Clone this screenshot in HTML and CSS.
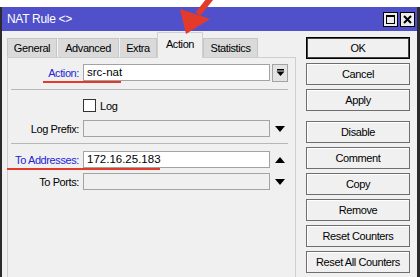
FILE: index.html
```html
<!DOCTYPE html>
<html lang="en">
<head>
  <meta charset="UTF-8">
  <title>NAT Rule</title>
  <link rel="stylesheet" href="styles.css">
</head>
<body>

  <div class="window">
    <div class="titlebar">
      <span class="title">NAT Rule &lt;&gt;</span>
      <div class="title-btns">
        <span class="tbtn">
          <svg width="13" height="13" viewBox="0 0 13 13"><rect x="2.5" y="2.5" width="8" height="8" fill="none" stroke="#000"/><rect x="2" y="2" width="9" height="2" fill="#000"/></svg>
        </span>
        <span class="tbtn">
          <svg width="13" height="13" viewBox="0 0 13 13"><path d="M3 3 L10 10 M10 3 L3 10" stroke="#000" stroke-width="2"/></svg>
        </span>
      </div>
    </div>

    <div class="body">
      <div class="main">
        <div class="tabs">
          <span class="tab tab-general">General</span>
          <span class="tab tab-advanced">Advanced</span>
          <span class="tab tab-extra">Extra</span>
          <span class="tab tab-action active">Action</span>
          <span class="tab tab-stats">Statistics</span>
        </div>

        <div class="panel">
          <div class="row first">
            <span class="lbl link">Action:</span>
            <span class="field">src-nat</span>
            <span class="side drop-btn">
              <svg width="9" height="9" viewBox="0 0 9 9"><rect x="1" y="1" width="7" height="1.5" fill="#000"/><path d="M0.5 3.5 H8.5 L4.5 8 Z" fill="#000"/></svg>
            </span>
          </div>

          <div class="sep"></div>

          <div class="row check-row">
            <span class="lbl"></span>
            <span class="checkbox"></span>
            <span class="check-text">Log</span>
          </div>

          <div class="row prefix-row">
            <span class="lbl">Log Prefix:</span>
            <span class="field disabled"></span>
            <span class="side"><span class="tri-down"></span></span>
          </div>

          <div class="sep sep2"></div>

          <div class="row addr-row">
            <span class="lbl link">To Addresses:</span>
            <span class="field">172.16.25.183</span>
            <span class="side"><span class="tri-up"></span></span>
          </div>

          <div class="row ports-row">
            <span class="lbl">To Ports:</span>
            <span class="field disabled"></span>
            <span class="side"><span class="tri-down"></span></span>
          </div>
        </div>
      </div>

      <div class="buttons">
        <button class="btn default">OK</button>
        <button class="btn">Cancel</button>
        <button class="btn">Apply</button>
        <button class="btn group">Disable</button>
        <button class="btn">Comment</button>
        <button class="btn">Copy</button>
        <button class="btn">Remove</button>
        <button class="btn">Reset Counters</button>
        <button class="btn">Reset All Counters</button>
      </div>
    </div>

    <!-- annotation marks -->
    <div class="mark mark-action"></div>
    <div class="mark mark-addr"></div>
  </div>

  <svg class="arrow" width="230" height="40" viewBox="0 0 230 40">
    <path d="M198 14 L214 -6" stroke="#e33a2c" stroke-width="6"/>
    <polygon points="180,9 210,19 186,34" fill="#e33a2c"/>
  </svg>

</body>
</html>
```

FILE: styles.css
```css
body {
  margin: 0;
  background-color: white;
  font-family: "Liberation Sans", Arial, sans-serif;
  font-size: 11px;
  position: relative;
  overflow: hidden;
  height: 277px;
}

.window {
  position: relative;
  margin-top: 7px;
  border-left: 2px solid #2a2a2a;
  border-right: 3px solid #2a2a2a;
  background-color: #f0f0f0;
  height: 270px;
}

.titlebar {
  height: 24px;
  background-color: #5050cb;
  color: white;
  display: flex;
  align-items: center;
  justify-content: space-between;
  padding: 0 2px 0 5px;
}

.title {
  font-size: 12px;
  letter-spacing: -0.3px;
}

.title-btns {
  display: flex;
  gap: 2px;
}

.tbtn {
  width: 15px;
  height: 15px;
  box-sizing: border-box;
  border: 1px solid #000;
  background-color: #ececec;
  display: flex;
  align-items: center;
  justify-content: center;
}

.body {
  display: flex;
}

.main {
  margin-left: 5px;
  width: 289px;
}

/* tabs */
.tabs {
  display: flex;
  align-items: flex-end;
  height: 26px;
}

.tab {
  box-sizing: border-box;
  height: 19px;
  line-height: 18px;
  text-align: center;
  background-color: #dadada;
  border: 1px solid #c6c6c6;
  border-bottom: none;
  letter-spacing: -0.4px;
}

.tab-general { width: 50px; }
.tab-advanced { width: 62px; border-left-color: #f6f6f6; }
.tab-extra { width: 38px; border-left-color: #f6f6f6; }
.tab-action { width: 46px; }
.tab-stats { width: 55px; }

.tab.active {
  height: 26px;
  margin-bottom: -1px;
  line-height: 22px;
  background-color: #f0f0f0;
  border-color: #d0d0d0;
  position: relative;
}

/* panel */
.panel {
  border: 1px solid #cfcfcf;
  border-bottom: none;
  height: 219px;
}

.row {
  display: flex;
  align-items: center;
  height: 17px;
  margin-top: 5px;
}

.row.first { margin-top: 6px; }
.check-row { height: 13px; margin-top: 9px; }
.prefix-row { margin-top: 8px; }
.addr-row { margin-top: 7px; }

.lbl {
  width: 71px;
  margin-right: 4px;
  text-align: right;
  letter-spacing: -0.4px;
  white-space: nowrap;
}

.lbl.link {
  color: #2323d8;
}

.field {
  box-sizing: border-box;
  width: 187px;
  height: 17px;
  line-height: 15px;
  padding-left: 3px;
  background-color: white;
  border: 1px solid #a3a3a3;
  font-size: 11.5px;
}

.field.disabled {
  background-color: #f0f0f0;
}

.side {
  width: 16px;
  height: 17px;
  margin-left: 2px;
  display: flex;
  align-items: center;
  justify-content: center;
}

.drop-btn {
  box-sizing: border-box;
  height: 18px;
  border: 1px solid #a3a3a3;
  background-color: #e4e4e4;
}

.tri-down {
  width: 0;
  height: 0;
  border-left: 5px solid transparent;
  border-right: 5px solid transparent;
  border-top: 6px solid #000;
}

.tri-up {
  width: 0;
  height: 0;
  border-left: 5px solid transparent;
  border-right: 5px solid transparent;
  border-bottom: 6px solid #000;
}

.sep {
  height: 1px;
  background-color: #b8b8b8;
  margin: 8px 7px 0 3px;
}

.sep.sep2 {
  margin-top: 6px;
}

.checkbox {
  box-sizing: border-box;
  width: 13px;
  height: 13px;
  background-color: white;
  border: 1px solid #333;
}

.check-text {
  margin-left: 4px;
  letter-spacing: -0.2px;
}

/* right buttons */
.buttons {
  margin-left: 10px;
  padding-top: 6px;
  width: 104px;
  display: flex;
  flex-direction: column;
  gap: 4px;
}

.btn {
  box-sizing: border-box;
  height: 22px;
  padding: 0;
  font-family: "Liberation Sans", Arial, sans-serif;
  font-size: 11px;
  letter-spacing: -0.4px;
  color: #000;
  background-color: #f0f0f0;
  border: 1px solid #6e6e6e;
  box-shadow: inset 1px 1px 0 #fff;
}

.btn.default {
  border: 1px solid #000;
  box-shadow: inset 0 0 0 1px #444;
}

.btn.group {
  margin-top: 6px;
}

/* red annotation marks */
.mark {
  position: absolute;
  height: 2px;
  background-color: #e33a2c;
}

.mark-action {
  left: 41px;
  top: 74px;
  width: 78px;
}

.mark-addr {
  left: 5px;
  top: 161px;
  width: 153px;
}

.arrow {
  position: absolute;
  top: 0;
  left: 0;
}
```
